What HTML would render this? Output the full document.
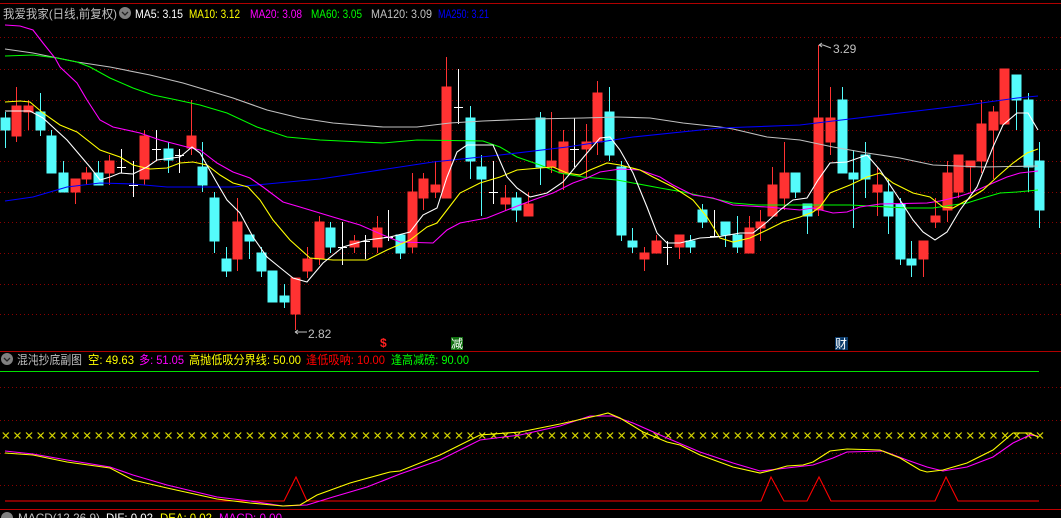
<!DOCTYPE html>
<html><head><meta charset="utf-8"><style>
html,body{margin:0;padding:0;background:#000;width:1061px;height:518px;overflow:hidden}
svg{display:block}
text{font-family:"Liberation Sans","Noto Sans CJK SC",sans-serif;font-size:12px}
</style></head><body>
<svg width="1061" height="518" viewBox="0 0 1061 518" xmlns="http://www.w3.org/2000/svg">
<defs>
<pattern id="xp" x="2.3" y="432" width="11.62" height="8" patternUnits="userSpaceOnUse">
<path d="M0.5 0.5 L6.5 6.5 M6.5 0.5 L0.5 6.5" stroke="#e0e000" stroke-width="1.2" fill="none"/>
</pattern>
</defs>
<rect width="1061" height="518" fill="#000"/>
<g stroke="#8a0000" stroke-width="1" stroke-dasharray="1 3" shape-rendering="crispEdges">
<line x1="0" y1="37.5" x2="1061" y2="37.5"/><line x1="0" y1="69.5" x2="1061" y2="69.5"/>
<line x1="0" y1="100.5" x2="1061" y2="100.5"/><line x1="0" y1="130.5" x2="1061" y2="130.5"/>
<line x1="0" y1="161.5" x2="1061" y2="161.5"/><line x1="0" y1="192.5" x2="1061" y2="192.5"/>
<line x1="0" y1="222.5" x2="1061" y2="222.5"/><line x1="0" y1="253.5" x2="1061" y2="253.5"/>
<line x1="0" y1="284.5" x2="1061" y2="284.5"/><line x1="0" y1="314.5" x2="1061" y2="314.5"/>
<line x1="0" y1="387.5" x2="1061" y2="387.5"/><line x1="0" y1="420.5" x2="1061" y2="420.5"/>
<line x1="0" y1="453.5" x2="1061" y2="453.5"/><line x1="0" y1="485.5" x2="1061" y2="485.5"/>
</g>
<g shape-rendering="crispEdges">
<line x1="0" y1="3.5" x2="1061" y2="3.5" stroke="#b00000"/>
<line x1="0" y1="351.5" x2="1061" y2="351.5" stroke="#b00000"/>
<line x1="0" y1="371.5" x2="1039" y2="371.5" stroke="#00e000"/>
<line x1="0" y1="509.5" x2="1061" y2="509.5" stroke="#c00000"/>
</g>
<!-- header -->
<text x="3" y="18" fill="#c0c0c0" textLength="114" lengthAdjust="spacingAndGlyphs">我爱我家(日线,前复权)</text>
<circle cx="125" cy="13" r="6" fill="#808080"/><path d="M122 12 l3 3 l3 -3" stroke="#222" stroke-width="1.3" fill="none"/>
<text x="135" y="18" fill="#fff" textLength="48" lengthAdjust="spacingAndGlyphs">MA5: 3.15</text>
<text x="189" y="18" fill="#ffff00" textLength="51" lengthAdjust="spacingAndGlyphs">MA10: 3.12</text>
<text x="250" y="18" fill="#ff00ff" textLength="52" lengthAdjust="spacingAndGlyphs">MA20: 3.08</text>
<text x="311" y="18" fill="#00ff00" textLength="51" lengthAdjust="spacingAndGlyphs">MA60: 3.05</text>
<text x="371" y="18" fill="#c0c0c0" textLength="61" lengthAdjust="spacingAndGlyphs">MA120: 3.09</text>
<text x="438" y="18" fill="#0000ff" textLength="51" lengthAdjust="spacingAndGlyphs">MA250: 3.21</text>
<!-- candles -->
<g shape-rendering="crispEdges" stroke-width="1">
<g stroke="#54fcfc" fill="#54fcfc">
<line x1="5.5" y1="112" x2="5.5" y2="148"/><rect x="1" y="118" width="9" height="12"/>
<line x1="40.5" y1="93" x2="40.5" y2="136"/><rect x="36" y="112" width="9" height="18"/>
<line x1="51.5" y1="130" x2="51.5" y2="173"/><rect x="47" y="136" width="9" height="37"/>
<line x1="63.5" y1="161" x2="63.5" y2="192"/><rect x="59" y="173" width="9" height="19"/>
<line x1="98.5" y1="161" x2="98.5" y2="185"/><rect x="94" y="173" width="9" height="12"/>
<line x1="168.5" y1="142" x2="168.5" y2="173"/><rect x="164" y="149" width="9" height="11"/>
<line x1="202.5" y1="142" x2="202.5" y2="192"/><rect x="198" y="167" width="9" height="18"/>
<line x1="214.5" y1="192" x2="214.5" y2="253"/><rect x="210" y="198" width="9" height="43"/>
<line x1="226.5" y1="247" x2="226.5" y2="277"/><rect x="222" y="259" width="9" height="12"/>
<line x1="249.5" y1="235" x2="249.5" y2="259"/><rect x="245" y="235" width="9" height="6"/>
<line x1="261.5" y1="247" x2="261.5" y2="277"/><rect x="257" y="253" width="9" height="18"/>
<rect x="268" y="271" width="9" height="31"/>
<line x1="284.5" y1="284" x2="284.5" y2="308"/><rect x="280" y="296" width="9" height="6"/>
<line x1="330.5" y1="222" x2="330.5" y2="253"/><rect x="326" y="228" width="9" height="19"/>
<line x1="400.5" y1="235" x2="400.5" y2="259"/><rect x="396" y="235" width="9" height="18"/>
<line x1="470.5" y1="106" x2="470.5" y2="179"/><rect x="466" y="118" width="9" height="43"/>
<line x1="481.5" y1="155" x2="481.5" y2="216"/><rect x="477" y="167" width="9" height="12"/>
<line x1="516.5" y1="192" x2="516.5" y2="222"/><rect x="512" y="198" width="9" height="12"/>
<line x1="540.5" y1="112" x2="540.5" y2="185"/><rect x="536" y="118" width="9" height="49"/>
<line x1="609.5" y1="87" x2="609.5" y2="161"/><rect x="605" y="112" width="9" height="43"/>
<line x1="621.5" y1="161" x2="621.5" y2="241"/><rect x="617" y="167" width="9" height="68"/>
<line x1="632.5" y1="228" x2="632.5" y2="253"/><rect x="628" y="241" width="9" height="6"/>
<line x1="690.5" y1="235" x2="690.5" y2="253"/><rect x="686" y="241" width="9" height="6"/>
<line x1="702.5" y1="204" x2="702.5" y2="228"/><rect x="698" y="210" width="9" height="12"/>
<line x1="725.5" y1="222" x2="725.5" y2="247"/><rect x="721" y="222" width="9" height="13"/>
<line x1="737.5" y1="216" x2="737.5" y2="253"/><rect x="733" y="235" width="9" height="12"/>
<line x1="795.5" y1="173" x2="795.5" y2="198"/><rect x="791" y="173" width="9" height="19"/>
<line x1="807.5" y1="204" x2="807.5" y2="234"/><rect x="803" y="204" width="9" height="12"/>
<line x1="842.5" y1="87" x2="842.5" y2="173"/><rect x="838" y="100" width="9" height="73"/>
<line x1="853.5" y1="150" x2="853.5" y2="228"/><rect x="849" y="173" width="9" height="6"/>
<line x1="865.5" y1="142" x2="865.5" y2="198"/><rect x="861" y="155" width="9" height="24"/>
<line x1="888.5" y1="179" x2="888.5" y2="234"/><rect x="884" y="192" width="9" height="24"/>
<line x1="900.5" y1="198" x2="900.5" y2="265"/><rect x="896" y="204" width="9" height="55"/>
<line x1="911.5" y1="241" x2="911.5" y2="277"/><rect x="907" y="259" width="9" height="6"/>
<line x1="1016.5" y1="75" x2="1016.5" y2="130"/><rect x="1012" y="75" width="9" height="25"/>
<line x1="1028.5" y1="93" x2="1028.5" y2="192"/><rect x="1024" y="100" width="9" height="67"/>
<line x1="1039.5" y1="142" x2="1039.5" y2="228"/><rect x="1035" y="161" width="9" height="49"/>
</g>
<g stroke="#ff3232" fill="#ff3232">
<line x1="16.5" y1="87" x2="16.5" y2="142"/><rect x="12" y="106" width="9" height="30"/>
<line x1="28.5" y1="100" x2="28.5" y2="130"/><rect x="24" y="106" width="9" height="6"/>
<line x1="75.5" y1="179" x2="75.5" y2="204"/><rect x="71" y="179" width="9" height="13"/>
<line x1="86.5" y1="167" x2="86.5" y2="185"/><rect x="82" y="173" width="9" height="6"/>
<line x1="109.5" y1="155" x2="109.5" y2="185"/><rect x="105" y="161" width="9" height="12"/>
<line x1="144.5" y1="130" x2="144.5" y2="185"/><rect x="140" y="136" width="9" height="43"/>
<line x1="191.5" y1="100" x2="191.5" y2="155"/><rect x="187" y="136" width="9" height="12"/>
<line x1="237.5" y1="198" x2="237.5" y2="271"/><rect x="233" y="222" width="9" height="37"/>
<line x1="295.5" y1="278" x2="295.5" y2="330"/><rect x="291" y="278" width="9" height="36"/>
<line x1="307.5" y1="247" x2="307.5" y2="278"/><rect x="303" y="259" width="9" height="12"/>
<line x1="319.5" y1="216" x2="319.5" y2="265"/><rect x="315" y="222" width="9" height="37"/>
<line x1="354.5" y1="235" x2="354.5" y2="253"/><rect x="350" y="241" width="9" height="6"/>
<line x1="377.5" y1="216" x2="377.5" y2="253"/><rect x="373" y="228" width="9" height="19"/>
<line x1="412.5" y1="173" x2="412.5" y2="253"/><rect x="408" y="192" width="9" height="55"/>
<line x1="423.5" y1="173" x2="423.5" y2="210"/><rect x="419" y="179" width="9" height="19"/>
<line x1="435.5" y1="161" x2="435.5" y2="198"/><rect x="431" y="185" width="9" height="7"/>
<line x1="446.5" y1="57" x2="446.5" y2="198"/><rect x="442" y="87" width="9" height="111"/>
<line x1="505.5" y1="185" x2="505.5" y2="210"/><rect x="501" y="198" width="9" height="6"/>
<line x1="528.5" y1="192" x2="528.5" y2="216"/><rect x="524" y="204" width="9" height="12"/>
<line x1="551.5" y1="112" x2="551.5" y2="173"/><rect x="547" y="161" width="9" height="6"/>
<line x1="563.5" y1="130" x2="563.5" y2="190"/><rect x="559" y="142" width="9" height="31"/>
<line x1="586.5" y1="124" x2="586.5" y2="179"/><rect x="582" y="142" width="9" height="7"/>
<line x1="597.5" y1="81" x2="597.5" y2="155"/><rect x="593" y="93" width="9" height="49"/>
<line x1="644.5" y1="247" x2="644.5" y2="271"/><rect x="640" y="253" width="9" height="6"/>
<line x1="656.5" y1="235" x2="656.5" y2="253"/><rect x="652" y="241" width="9" height="12"/>
<line x1="679.5" y1="235" x2="679.5" y2="259"/><rect x="675" y="235" width="9" height="12"/>
<line x1="749.5" y1="216" x2="749.5" y2="253"/><rect x="745" y="228" width="9" height="25"/>
<line x1="760.5" y1="210" x2="760.5" y2="241"/><rect x="756" y="222" width="9" height="6"/>
<line x1="772.5" y1="167" x2="772.5" y2="216"/><rect x="768" y="185" width="9" height="31"/>
<line x1="784.5" y1="142" x2="784.5" y2="210"/><rect x="780" y="173" width="9" height="25"/>
<line x1="818.5" y1="45" x2="818.5" y2="216"/><rect x="814" y="118" width="9" height="92"/>
<line x1="830.5" y1="87" x2="830.5" y2="155"/><rect x="826" y="118" width="9" height="24"/>
<line x1="877.5" y1="167" x2="877.5" y2="216"/><rect x="873" y="185" width="9" height="7"/>
<line x1="923.5" y1="241" x2="923.5" y2="277"/><rect x="919" y="241" width="9" height="18"/>
<line x1="935.5" y1="198" x2="935.5" y2="228"/><rect x="931" y="216" width="9" height="6"/>
<line x1="947.5" y1="161" x2="947.5" y2="222"/><rect x="943" y="173" width="9" height="37"/>
<line x1="958.5" y1="155" x2="958.5" y2="198"/><rect x="954" y="155" width="9" height="37"/>
<line x1="970.5" y1="161" x2="970.5" y2="192"/><rect x="966" y="161" width="9" height="6"/>
<line x1="981.5" y1="100" x2="981.5" y2="173"/><rect x="977" y="124" width="9" height="37"/>
<line x1="993.5" y1="106" x2="993.5" y2="179"/><rect x="989" y="112" width="9" height="18"/>
<rect x="1000" y="69" width="9" height="55"/>
</g>
<g stroke="#fff" fill="none">
<line x1="121.5" y1="149" x2="121.5" y2="173"/><line x1="117" y1="167.5" x2="126" y2="167.5"/>
<line x1="133.5" y1="161" x2="133.5" y2="197"/><line x1="129" y1="185.5" x2="138" y2="185.5"/>
<line x1="156.5" y1="130" x2="156.5" y2="161"/><line x1="152" y1="149.5" x2="161" y2="149.5"/>
<line x1="179.5" y1="149" x2="179.5" y2="173"/><line x1="175" y1="155.5" x2="184" y2="155.5"/>
<line x1="342.5" y1="222" x2="342.5" y2="265"/><line x1="338" y1="247.5" x2="347" y2="247.5"/>
<line x1="365.5" y1="235" x2="365.5" y2="259"/><line x1="361" y1="241.5" x2="370" y2="241.5"/>
<line x1="388.5" y1="210" x2="388.5" y2="241"/><line x1="384" y1="237.5" x2="393" y2="237.5"/>
<line x1="458.5" y1="69" x2="458.5" y2="124"/><line x1="454" y1="107.5" x2="463" y2="107.5"/>
<line x1="493.5" y1="161" x2="493.5" y2="204"/><line x1="489" y1="192.5" x2="498" y2="192.5"/>
<line x1="574.5" y1="118" x2="574.5" y2="167"/><line x1="570" y1="149.5" x2="579" y2="149.5"/>
<line x1="667.5" y1="241" x2="667.5" y2="265"/><line x1="663" y1="247.5" x2="672" y2="247.5"/>
<line x1="714.5" y1="210" x2="714.5" y2="237"/><line x1="710" y1="236.5" x2="719" y2="236.5"/>
</g>
</g>
<!-- MAs -->
<g fill="none" stroke-width="1.1">
<polyline stroke="#c0c0c0" points="5,49 33,53 77,62 110,67 150,75 183,83 233,98 267,110 300,118 333,123 383,127 417,127 450,123 483,121 533,119 583,118 617,117 650,118 683,123 720,127 733,129 767,137 800,140 833,147 867,153 900,158 933,165 983,167 1038,166"/>
<polyline stroke="#00ff00" points="5,56 33,55 57,58 77,62 90,67 110,78 133,88 153,95 177,100 200,105 227,113 257,127 287,137 320,140 383,143 417,140 483,141 500,147 517,157 540,165 560,173 583,177 617,180 633,183 660,188 683,192 720,200 733,203 757,205 850,205 907,208 933,208 953,205 967,203 983,198 1000,193 1017,192 1038,190"/>
<polyline stroke="#0000ff" points="5,201 33,197 67,187 100,183 133,184 167,187 233,187 267,184 320,179 367,172 433,162 500,155 567,147 633,137 720,128 800,125 833,121 900,113 967,105 1017,98 1038,96"/>
<polyline stroke="#ff00ff" points="5,25 20,26 33,30 43,43 55,58 60,67 77,83 87,100 100,120 113,127 140,133 160,140 187,147 200,150 217,163 233,172 250,178 263,187 283,202 300,207 333,217 360,225 383,235 400,242 433,243 447,230 460,223 487,218 507,210 533,200 553,193 573,183 587,178 600,172 620,169 640,170 660,177 673,185 693,195 713,198 733,205 767,207 800,210 813,208 833,213 847,212 860,207 880,204 927,203 940,201 957,197 973,192 993,183 1007,177 1020,173 1038,171"/>
<polyline stroke="#ffff00" points="5,102 20,101 30,102 43,113 60,125 77,132 100,150 120,157 133,165 150,169 167,168 180,163 193,162 207,165 220,175 233,183 248,187 260,200 273,220 290,240 310,258 333,260 367,260 387,250 410,240 427,227 437,223 447,210 460,193 480,183 500,177 517,170 540,168 553,167 567,173 580,175 590,170 607,163 620,165 640,170 653,177 673,187 693,200 707,217 720,238 733,242 750,238 767,230 783,222 800,217 813,212 820,207 830,193 850,185 867,177 880,173 893,183 913,193 930,197 943,207 953,208 967,200 983,190 997,177 1013,163 1027,153 1038,149"/>
<polyline stroke="#ffffff" points="5,111 30,111 43,118 67,140 90,167 100,180 110,177 120,173 133,174 147,167 157,160 180,157 192,147 200,153 217,183 227,200 240,213 253,237 267,257 283,270 293,278 307,282 323,263 343,247 367,240 390,237 410,232 423,215 437,208 447,177 457,152 467,145 493,145 507,177 517,188 530,197 547,193 563,182 577,165 587,153 600,138 610,137 620,150 633,173 647,207 657,233 667,243 680,243 700,238 717,237 740,233 753,233 767,222 780,210 793,200 807,198 818,180 830,163 847,162 867,155 880,170 900,200 913,220 923,232 935,240 947,232 960,210 977,187 993,147 1003,125 1017,113 1028,113 1038,130"/>
</g>
<!-- markers -->
<path d="M819 45 h4 M819 45 l3 -2 M819 45 l3 2 M823 45 l8 3" stroke="#c0c0c0" fill="none"/>
<text x="833" y="53" fill="#c0c0c0">3.29</text>
<path d="M295 332 h12 M295 332 l3 -2 M295 332 l3 2" stroke="#c0c0c0" fill="none"/>
<text x="308" y="338" fill="#c0c0c0">2.82</text>
<text x="380" y="347" fill="#ff2020" font-weight="bold">$</text>
<rect x="451" y="337" width="12" height="13" fill="#107010"/>
<text x="451" y="348" fill="#fff">减</text>
<rect x="835" y="337" width="13" height="13" fill="#0a3a6a"/>
<text x="835" y="348" fill="#fff">财</text>
<!-- sub header -->
<circle cx="7" cy="359" r="6" fill="#808080"/><path d="M4 358 l3 3 l3 -3" stroke="#222" stroke-width="1.3" fill="none"/>
<text x="17" y="364" fill="#c0c0c0" textLength="65" lengthAdjust="spacingAndGlyphs">混沌抄底副图</text>
<text x="88" y="364" fill="#ffff00" textLength="46" lengthAdjust="spacingAndGlyphs">空: 49.63</text>
<text x="139" y="364" fill="#ff00ff" textLength="45" lengthAdjust="spacingAndGlyphs">多: 51.05</text>
<text x="189" y="364" fill="#ffff00" textLength="112" lengthAdjust="spacingAndGlyphs">高抛低吸分界线: 50.00</text>
<text x="306" y="364" fill="#ff0000" textLength="79" lengthAdjust="spacingAndGlyphs">逢低吸呐: 10.00</text>
<text x="391" y="364" fill="#00ff00" textLength="78" lengthAdjust="spacingAndGlyphs">逢高减磅: 90.00</text>
<!-- x markers -->
<rect x="2" y="432" width="1043" height="8" fill="url(#xp)"/>
<!-- sub lines -->
<polyline fill="none" stroke="#ff0000" stroke-width="1.1" points="5,501 284,501 296,477 307,501 761,501 771,477 784,501 807,501 819,477 831,501 935,501 946,477 958,501 1039,501"/>
<polyline fill="none" stroke="#ff00ff" stroke-width="1.1" points="5,451 33,454 67,460 110,467 133,475 167,485 217,497 250,501 283,506 307,505 333,497 367,487 400,474 440,460 480,440 520,435 560,426 590,416 613,416 633,423 667,438 700,452 733,463 760,471 787,468 813,465 833,458 847,452 883,451 907,460 927,467 943,471 967,467 993,457 1013,443 1030,435 1038,436"/>
<polyline fill="none" stroke="#ffff00" stroke-width="1.1" points="5,453 33,455 67,462 110,468 133,480 167,488 217,499 250,503 283,506 300,505 317,495 350,483 390,472 400,471 440,455 480,435 520,432 560,424 600,415 608,413 620,418 643,432 667,442 680,445 700,455 733,467 760,473 773,470 787,466 803,465 813,462 830,451 847,449 880,450 900,458 920,470 927,472 943,470 967,463 993,450 1013,433 1030,433 1038,437"/>
<!-- bottom -->
<circle cx="7" cy="518" r="6" fill="#808080"/>
<text x="18" y="522" fill="#c0c0c0" textLength="82" lengthAdjust="spacingAndGlyphs">MACD(12,26,9)</text>
<text x="106" y="522" fill="#fff" textLength="47" lengthAdjust="spacingAndGlyphs">DIF: 0.02</text>
<text x="160" y="522" fill="#ffff00" textLength="52" lengthAdjust="spacingAndGlyphs">DEA: 0.02</text>
<text x="219" y="522" fill="#ff00ff" textLength="63" lengthAdjust="spacingAndGlyphs">MACD: 0.00</text>
</svg>
</body></html>
